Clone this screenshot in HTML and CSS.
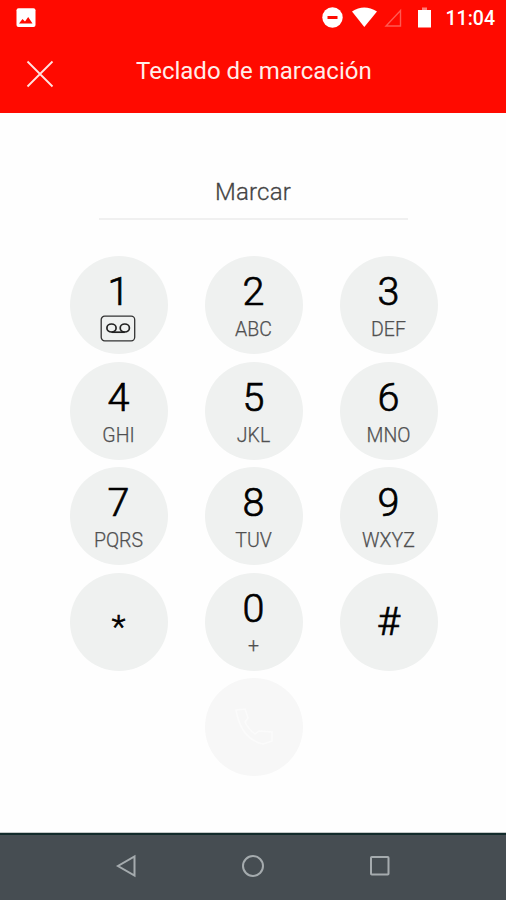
FILE: index.html
```html
<!DOCTYPE html>
<html lang="es">
<head>
    <meta charset="UTF-8">
    <meta name="viewport" content="width=device-width, initial-scale=1.0">
    <title>Teclado de marcación</title>
    <link rel="stylesheet" href="styles.css">
</head>
<body>

<div class="header">
    <div class="status-bar">
        <svg class="status-photo" width="20" height="20" viewBox="0 0 20 20">
            <rect x="0.5" y="0.2" width="19" height="18.8" rx="2" fill="#fff"/>
            <path d="M3 15.5l3.5-4.5 2.5 2.5 3.2-4.5 4.3 6.5z" fill="#ff0a00"/>
        </svg>
        <div class="status-icons">
            <svg width="82" height="24" viewBox="0 0 82 24">
                <circle cx="10.5" cy="12.5" r="10.2" fill="#fff"/>
                <rect x="5.5" y="11" width="10" height="3" fill="#ff0a00"/>
                <path d="M30 6.5Q42 -1.5 55 6.5L42.3 22z" fill="#fff"/>
                <path d="M78.5 5.5v15.5H64z" fill="none" stroke="#ff5a52" stroke-width="1.4"/>
            </svg>
            <svg class="battery" width="15" height="24" viewBox="0 0 15 24">
                <path d="M5 2.5h5v3H5z" fill="#ff7e78"/>
                <path d="M1 5h13v17.5H1z" fill="#fff"/>
            </svg>
            <span class="clock">11:04</span>
        </div>
    </div>
    <div class="title-bar">
        <svg class="close" width="28" height="28" viewBox="0 0 28 28">
            <path d="M1.5 1.5l25 25M26.5 1.5l-25 25" stroke="#ffe4e0" stroke-width="1.8"/>
        </svg>
        <h1>Teclado de marcación</h1>
    </div>
</div>

<div class="content">
    <div class="number">Marcar</div>

    <div class="keypad">
        <div class="key">
            <span class="digit">1</span>
            <svg class="voicemail" width="36" height="27" viewBox="0 0 36 27">
                <rect x="1.2" y="1.2" width="33.5" height="24.6" rx="3.5" fill="none" stroke="#333" stroke-width="1.3"/>
                <g fill="none" stroke="#222" stroke-width="1.7">
                    <ellipse cx="11.5" cy="13" rx="4.6" ry="4"/>
                    <ellipse cx="24.8" cy="13" rx="4.6" ry="4"/>
                    <path d="M11.5 17.2h13.3"/>
                </g>
            </svg>
        </div>
        <div class="key"><span class="digit">2</span><span class="letters">ABC</span></div>
        <div class="key"><span class="digit">3</span><span class="letters">DEF</span></div>
        <div class="key"><span class="digit">4</span><span class="letters">GHI</span></div>
        <div class="key"><span class="digit">5</span><span class="letters">JKL</span></div>
        <div class="key"><span class="digit">6</span><span class="letters">MNO</span></div>
        <div class="key"><span class="digit">7</span><span class="letters">PQRS</span></div>
        <div class="key"><span class="digit">8</span><span class="letters">TUV</span></div>
        <div class="key"><span class="digit">9</span><span class="letters">WXYZ</span></div>
        <div class="key symbol star"><span class="digit">*</span></div>
        <div class="key"><span class="digit">0</span><span class="letters plus">+</span></div>
        <div class="key symbol"><span class="digit">#</span></div>
        <div class="key call">
            <svg width="40" height="40" viewBox="0 0 40 40">
                <path d="M2 3l9-1 3 9-3 4q4 8 10 12l4-3 13 1v9l-9 3Q7 32 2 3z" fill="none" stroke="#fbfbfb" stroke-width="1.5"/>
            </svg>
        </div>
    </div>
</div>

<div class="nav-bar">
    <svg width="24" height="24" viewBox="0 0 24 24">
        <path d="M20.5 2.5v19L4 12z"/>
    </svg>
    <svg width="24" height="24" viewBox="0 0 24 24">
        <circle cx="12" cy="12" r="10"/>
    </svg>
    <svg width="24" height="24" viewBox="0 0 24 24">
        <rect x="3" y="3" width="17.5" height="17.5" rx="0.8"/>
    </svg>
</div>

</body>
</html>
```
FILE: styles.css
```css
body {
    font-family: Roboto, "Liberation Sans", sans-serif;
    background-color: #fefefe;
    margin: 0;
    height: 900px;
    display: flex;
    flex-direction: column;
    overflow: hidden;
}
.header {
    background-color: #ff0a00;
    color: white;
    height: 113px;
}
.status-bar {
    display: flex;
    justify-content: space-between;
    height: 36px;
    padding: 0 11px 0 16px;
}
.status-photo {
    margin-top: 8px;
}
.status-icons {
    display: flex;
    padding-top: 5px;
}
.status-icons .battery {
    margin-left: 13px;
}
.clock {
    font-size: 19.5px;
    font-weight: 500;
    line-height: 27px;
    margin-left: 14px;
}
.title-bar {
    display: grid;
    grid-template-columns: 136px auto;
    height: 70px;
    align-items: center;
}
.title-bar h1 {
    margin: 0;
    font-size: 24px;
    font-weight: 400;
    white-space: nowrap;
    color: #ffeeea;
}
.close {
    margin: 5px 0 0 26px;
}
.content {
    flex: 1;
}
.number {
    width: 309px;
    height: 52px;
    margin: 53px auto 0;
    border-bottom: 2px solid #f0f0f0;
    text-align: center;
    font-size: 24px;
    font-weight: 300;
    line-height: 52px;
    letter-spacing: 0.2px;
    color: #444;
    -webkit-text-stroke: 0.3px #444;
}
.keypad {
    display: grid;
    grid-template-columns: repeat(3, 98px);
    grid-auto-rows: 98px;
    gap: 7.5px 37px;
    justify-content: center;
    margin-top: 36px;
    padding-left: 1px;
}
.key {
    display: flex;
    flex-direction: column;
    align-items: center;
    border-radius: 50%;
    background-color: #eff1f0;
}
.digit {
    font-size: 39.5px;
    font-weight: 300;
    line-height: 44px;
    margin-top: 14px;
    color: #000;
    -webkit-text-stroke: 0.7px #000;
}
.letters {
    font-size: 19.5px;
    font-weight: 300;
    line-height: 22px;
    margin-top: 5px;
    color: #505050;
    -webkit-text-stroke: 0.25px #505050;
}
.plus {
    margin-top: 4px;
}
.voicemail {
    margin: 1px 1px 0 0;
}
.symbol {
    justify-content: center;
}
.symbol .digit {
    margin-top: 0;
}
.star .digit {
    font-size: 32px;
    padding-top: 8px;
}
.call {
    grid-column: 2;
    justify-content: center;
    background-color: #f7f7f7;
}
.nav-bar {
    display: flex;
    justify-content: center;
    gap: 103px;
    height: 46px;
    padding-top: 19px;
    border-top: 2px solid #122b2b;
    background-color: #464d52;
    box-shadow: 0 -1px 0 #c4c8c8;
}
.nav-bar svg {
    fill: none;
    stroke: #a5abae;
    stroke-width: 2;
}
```
